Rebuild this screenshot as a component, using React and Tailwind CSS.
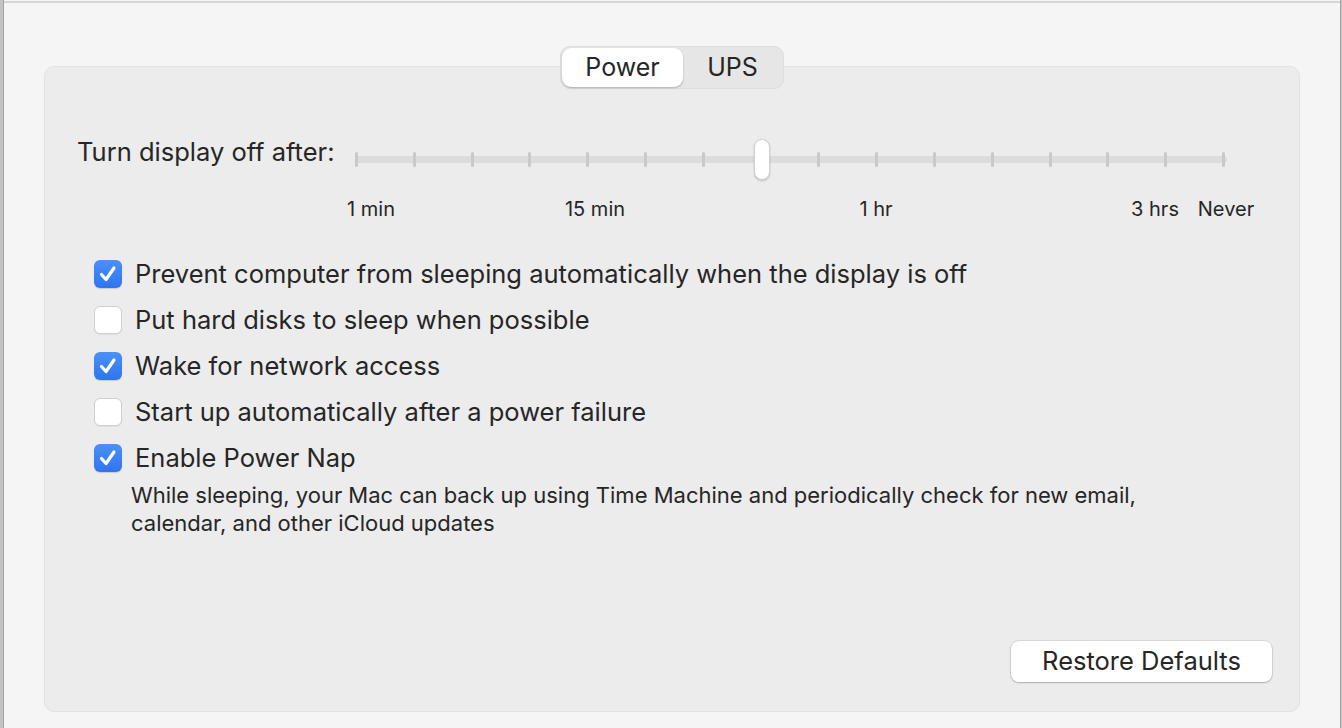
import React from "react";

const font = { fontFamily: "Inter, 'Liberation Sans', sans-serif" };

const ticks = Array.from({ length: 16 }, (_, i) => i);

const labels = [
  { text: "1 min", x: 16 },
  { text: "15 min", x: 240 },
  { text: "1 hr", x: 521 },
  { text: "3 hrs", x: 800 },
  { text: "Never", x: 871 },
];

const options = [
  { label: "Prevent computer from sleeping automatically when the display is off", checked: true },
  { label: "Put hard disks to sleep when possible", checked: false },
  { label: "Wake for network access", checked: true },
  { label: "Start up automatically after a power failure", checked: false },
  { label: "Enable Power Nap", checked: true },
];

function Checkbox({ checked }) {
  if (checked) {
    return (
      <div className="w-[28px] h-[28px] rounded-[6px] bg-gradient-to-b from-[#4b90f8] to-[#2f74ef] flex items-center justify-center shadow-[0_1px_1px_rgba(0,0,0,0.15)] shrink-0">
        <svg width="22" height="22" viewBox="0 0 22 22" fill="none">
          <path d="M4.5 11.5 L9 16.5 L17 5" stroke="white" strokeWidth="3.2" strokeLinecap="round" strokeLinejoin="round" />
        </svg>
      </div>
    );
  }
  return (
    <div className="w-[28px] h-[28px] rounded-[6px] bg-white border border-[#cfcfcf] shadow-[0_1px_1px_rgba(0,0,0,0.06)] shrink-0" />
  );
}

function Slider() {
  return (
    <div className="relative w-[872px] h-[99px]">
      <div className="absolute left-0 right-0 top-[22px] h-[7px] rounded-full bg-[#dcdcdc]" />
      {ticks.map((i) =>
        i === 7 ? null : (
          <div
            key={i}
            className="absolute top-[18px] w-[3px] h-[15px] rounded-full bg-[#c9c9c9]"
            style={{ left: i * 57.8 }}
          />
        )
      )}
      <div
        className="absolute top-[5px] w-[16px] h-[41px] rounded-full bg-white border border-[#d0d0d0] shadow-[0_1px_2px_rgba(0,0,0,0.2)]"
        style={{ left: 7 * 57.8 - 6 }}
      />
      {labels.map((l) => (
        <div
          key={l.text}
          className="absolute top-[60px] -translate-x-1/2 text-[20px] text-[#262626] whitespace-nowrap"
          style={{ left: l.x }}
        >
          {l.text}
        </div>
      ))}
    </div>
  );
}

export default function App() {
  return (
    <div className="w-[1342px] h-[728px] flex bg-[#f5f5f5] overflow-hidden" style={font}>
      <div className="w-[4px] h-full bg-[#c3c3c3] border-r border-[#a3a3a3] shrink-0" />
      <div className="flex-1 flex flex-col border-t-[2px] border-[#d6d6d6] mt-[1px]">
        <div className="flex flex-col items-center pt-[43px] px-[40px]">
          <div className="relative z-10 flex items-center h-[43px] rounded-[10px] bg-[#e6e6e6] border border-[#dedede] p-[1px]">
            <div className="h-full w-[121px] rounded-[9px] bg-white shadow-[0_1px_2px_rgba(0,0,0,0.25)] flex items-center justify-center text-[25px] text-[#262626]">
              Power
            </div>
            <div className="h-full w-[99px] flex items-center justify-center text-[25px] text-[#262626]">
              UPS
            </div>
          </div>
          <div className="-mt-[23px] w-full h-[646px] rounded-[10px] bg-[#ececec] border border-[#e2e2e2] flex flex-col">
            <div className="flex items-start pl-[32px] pt-[67px]">
              <div className="w-[278px] text-[25.5px] text-[#262626] leading-none pt-[5px]">
                Turn display off after:
              </div>
              <Slider />
            </div>
            <div className="flex flex-col pl-[49px] mt-[18px]">
              {options.map((o) => (
                <div key={o.label} className="flex items-center gap-[13px] h-[46px]">
                  <Checkbox checked={o.checked} />
                  <span className="text-[25.5px] text-[#262626]">{o.label}</span>
                </div>
              ))}
              <div className="pl-[37px] text-[22px] leading-[28px] text-[#262626] mt-0">
                While sleeping, your Mac can back up using Time Machine and periodically check for new email,
                <br />
                calendar, and other iCloud updates
              </div>
            </div>
            <div className="flex-1" />
            <div className="flex justify-end pr-[27px] pb-[29px]">
              <button className="w-[261px] h-[41px] rounded-[8px] bg-white shadow-[0_0_0_1px_rgba(0,0,0,0.08),0_1px_2px_rgba(0,0,0,0.2)] text-[25.5px] text-[#262626]">
                Restore Defaults
              </button>
            </div>
          </div>
        </div>
      </div>
      <div className="w-[2px] h-full bg-[#c3c3c3] border-l border-[#a3a3a3] shrink-0" />
    </div>
  );
}
